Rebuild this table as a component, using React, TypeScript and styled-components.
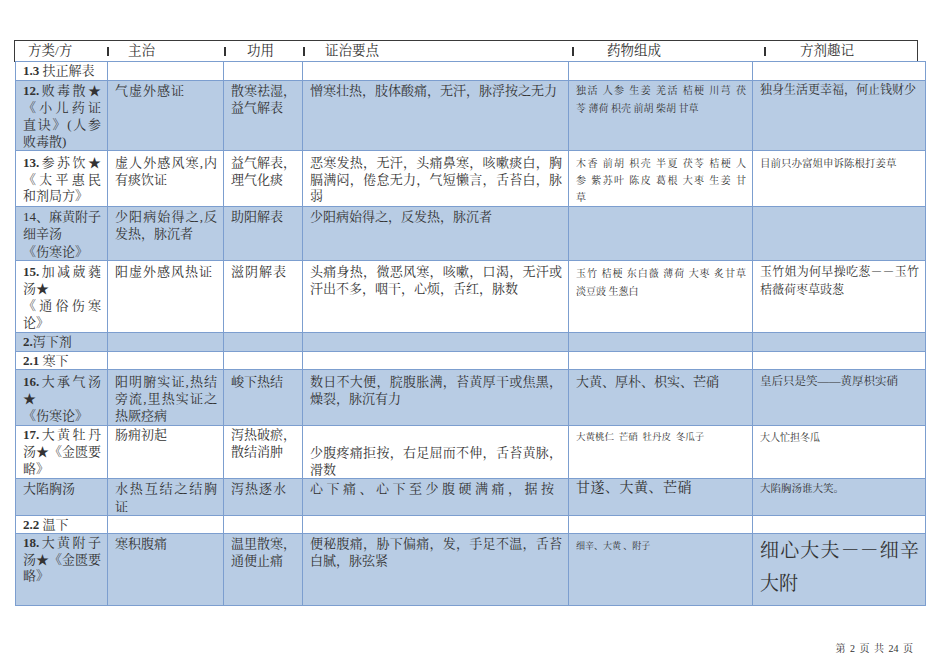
import React from 'react';
import styled, { createGlobalStyle } from 'styled-components';

const GlobalStyle = createGlobalStyle`
  html, body {
    margin: 0;
    padding: 0;
    background: #ffffff;
  }
  body {
    font-family: "Liberation Serif", "Noto Serif CJK SC", "Noto Sans CJK SC", serif;
    color: #333333;
  }
`;

const Page = styled.div`
  width: 950px;
  height: 672px;
  box-sizing: border-box;
  padding: 40px 0 0 14px;
`;

const HeaderBar = styled.div`
  display: grid;
  grid-template-columns: 92px 117px 79px 269px 192px 1fr;
  align-items: center;
  width: 904px;
  height: 22px;
  box-sizing: border-box;
  border: 1px solid #3a3a3a;
  font-size: 13.5px;
  line-height: 20px;
  white-space: nowrap;
`;

const HeadCell = styled.div`
  display: flex;
  align-items: center;
`;

const Bar = styled.span`
  display: inline-block;
  width: 1.5px;
  height: 9px;
  background: #333333;
`;

const Label = styled.span<{ $indent: number }>`
  margin-left: ${p => p.$indent}px;
`;

const Table = styled.table`
  width: 910px;
  margin: -1px 0 0 1px;
  border-collapse: collapse;
  table-layout: fixed;
  border: 1.5px solid #5b81b9;
`;

const Col = styled.col<{ $w: number }>`
  width: ${p => p.$w}px;
`;

const Row = styled.tr<{ $blue?: boolean; $h: number }>`
  height: ${p => p.$h}px;
  background: ${p => (p.$blue ? '#b8cce4' : '#ffffff')};
`;

const Cell = styled.td<{ $size?: number; $lh?: number; $ls?: number; $pt?: number }>`
  border: 1px solid #7c9ecf;
  padding: ${p => p.$pt ?? 1}px 6px 0 7px;
  vertical-align: top;
  font-size: ${p => p.$size ?? 13}px;
  line-height: ${p => p.$lh ?? 17}px;
  letter-spacing: ${p => p.$ls ?? 0}px;
`;

// a line that Word stretched to the cell width
const J = styled.span`
  display: block;
  text-align: justify;
  text-align-last: justify;
`;

const L = styled.span`
  display: block;
`;

const Num = styled.b`
  font-family: "Liberation Serif", serif;
  font-weight: bold;
`;

const Footer = styled.div`
  width: 904px;
  box-sizing: border-box;
  margin-top: 36px;
  padding-right: 5px;
  text-align: right;
  font-size: 10px;
  line-height: 14px;
  word-spacing: 2px;
  color: #333333;
`;

const COLS = [92, 116, 79, 266, 184, 173];

const r13 = { $pt: 4, $lh: 16.5 };
const r14 = { $pt: 1, $lh: 17.3 };
const r16 = { $pt: 3 };
const sec = { $pt: 1, $lh: 16 };

export default function App() {
  return (
    <>
      <GlobalStyle />
      <Page>
        <HeaderBar>
          <HeadCell><Label $indent={13}>方类/方</Label></HeadCell>
          <HeadCell><Bar /><Label $indent={19.5}>主治</Label></HeadCell>
          <HeadCell><Bar /><Label $indent={21.5}>功用</Label></HeadCell>
          <HeadCell><Bar /><Label $indent={20.5}>证治要点</Label></HeadCell>
          <HeadCell><Bar /><Label $indent={33.5}>药物组成</Label></HeadCell>
          <HeadCell><Bar /><Label $indent={34.5}>方剂趣记</Label></HeadCell>
        </HeaderBar>

        <Table>
          <colgroup>
            {COLS.map((w, i) => <Col key={i} $w={w} />)}
          </colgroup>
          <tbody>
            <Row $h={19}>
              <Cell {...sec}><L><Num>1.3</Num> 扶正解表</L></Cell>
              <Cell /><Cell /><Cell /><Cell /><Cell />
            </Row>

            <Row $blue $h={70}>
              <Cell>
                <J><Num>12.</Num>败毒散★</J>
                <J>《小儿药证</J>
                <J>直诀》(人参</J>
                <L>败毒散)</L>
              </Cell>
              <Cell $ls={1}>气虚外感证</Cell>
              <Cell><L>散寒祛湿，</L><L>益气解表</L></Cell>
              <Cell><L>憎寒壮热，肢体酸痛，无汗，脉浮按之无力</L></Cell>
              <Cell $size={10} $lh={18}>
                <J>独活 人参 生姜 羌活 桔梗 川芎 茯</J>
                <L>苓 薄荷 枳壳 前胡 柴胡 甘草</L>
              </Cell>
              <Cell $size={12}>独身生活更幸福，何止钱财少</Cell>
            </Row>

            <Row $h={55}>
              <Cell {...r13}>
                <J><Num>13.</Num>参苏饮★</J>
                <J>《太平惠民</J>
                <L>和剂局方》</L>
              </Cell>
              <Cell {...r13}><J>虚人外感风寒,内</J><L>有痰饮证</L></Cell>
              <Cell {...r13}><L>益气解表，</L><L>理气化痰</L></Cell>
              <Cell {...r13}>
                <J>恶寒发热，无汗，头痛鼻寒，咳嗽痰白，胸</J>
                <J>膈满闷，倦怠无力，气短懒言，舌苔白，脉</J>
                <L>弱</L>
              </Cell>
              <Cell $pt={4} $lh={17} $size={10}>
                <J>木香 前胡 枳壳 半夏 茯苓 桔梗 人</J>
                <J>参 紫苏叶 陈皮 葛根 大枣 生姜 甘</J>
                <L>草</L>
              </Cell>
              <Cell $pt={4} $lh={17} $size={10.5}>目前只办富姐申诉陈根打姜草</Cell>
            </Row>

            <Row $blue $h={54}>
              <Cell {...r14}>
                <J>14、麻黄附子</J>
                <L>细辛汤</L>
                <L>《伤寒论》</L>
              </Cell>
              <Cell {...r14}><J>少阳病始得之,反</J><L>发热，脉沉者</L></Cell>
              <Cell {...r14}>助阳解表</Cell>
              <Cell {...r14}>少阳病始得之，反发热，脉沉者</Cell>
              <Cell /><Cell />
            </Row>

            <Row $h={72}>
              <Cell $pt={1.5}>
                <J><Num>15.</Num>加减葳蕤</J>
                <L>汤★</L>
                <J>《通俗伤寒</J>
                <L>论》</L>
              </Cell>
              <Cell $pt={1.5} $ls={1}>阳虚外感风热证</Cell>
              <Cell $pt={1.5} $ls={1}>滋阴解表</Cell>
              <Cell $pt={1.5}>
                <J>头痛身热，微恶风寒，咳嗽，口渴，无汗或</J>
                <L>汗出不多，咽干，心烦，舌红，脉数</L>
              </Cell>
              <Cell $pt={3.5} $size={10} $lh={18}>
                <J>玉竹 桔梗 东白薇 薄荷 大枣 炙甘草</J>
                <L>淡豆豉 生葱白</L>
              </Cell>
              <Cell $pt={2} $size={12} $lh={18}>
                <J>玉竹姐为何早操吃葱－－玉竹</J>
                <L>桔薇荷枣草豉葱</L>
              </Cell>
            </Row>

            <Row $blue $h={19}>
              <Cell {...sec}><L><Num>2.</Num>泻下剂</L></Cell>
              <Cell /><Cell /><Cell /><Cell /><Cell />
            </Row>

            <Row $h={18}>
              <Cell {...sec}><L><Num>2.1</Num> 寒下</L></Cell>
              <Cell /><Cell /><Cell /><Cell /><Cell />
            </Row>

            <Row $blue $h={56}>
              <Cell {...r16}>
                <J><Num>16.</Num>大承气汤</J>
                <L>★</L>
                <L>《伤寒论》</L>
              </Cell>
              <Cell {...r16}>
                <J>阳明腑实证,热结</J>
                <J>旁流,里热实证之</J>
                <L>热厥痉病</L>
              </Cell>
              <Cell {...r16}>峻下热结</Cell>
              <Cell {...r16}>
                <J>数日不大便，脘腹胀满，苔黄厚干或焦黑，</J>
                <L>燥裂，脉沉有力</L>
              </Cell>
              <Cell {...r16}>大黄、厚朴、枳实、芒硝</Cell>
              <Cell {...r16} $size={11.5}>皇后只是笑——黄厚枳实硝</Cell>
            </Row>

            <Row $h={53}>
              <Cell $pt={0}>
                <J><Num>17.</Num>大黄牡丹</J>
                <J>汤★《金匮要</J>
                <L>略》</L>
              </Cell>
              <Cell $pt={0}>肠痈初起</Cell>
              <Cell $pt={0}><L>泻热破瘀，</L><L>散结消肿</L></Cell>
              <Cell $pt={18}>
                <J>少腹疼痛拒按，右足屈而不伸，舌苔黄脉，</J>
                <L>滑数</L>
              </Cell>
              <Cell $pt={2.5} $size={9.5}>大黄桃仁&nbsp; 芒硝&nbsp; 牡丹皮&nbsp; 冬瓜子</Cell>
              <Cell $pt={2.5} $size={10}>大人忙担冬瓜</Cell>
            </Row>

            <Row $blue $h={37}>
              <Cell $pt={1}>大陷胸汤</Cell>
              <Cell $pt={1} $lh={17.5}><J>水热互结之结胸</J><L>证</L></Cell>
              <Cell $pt={1} $ls={1}>泻热逐水</Cell>
              <Cell $pt={1} $ls={3.5}>心下痛、心下至少腹硬满痛，据按</Cell>
              <Cell $pt={0} $size={14} $ls={0.5}>甘遂、大黄、芒硝</Cell>
              <Cell $pt={1} $size={10.5}>大陷胸汤谁大笑。</Cell>
            </Row>

            <Row $h={18}>
              <Cell {...sec}><L><Num>2.2</Num> 温下</L></Cell>
              <Cell /><Cell /><Cell /><Cell /><Cell />
            </Row>

            <Row $blue $h={72}>
              <Cell $lh={16.7}>
                <J><Num>18.</Num>大黄附子</J>
                <J>汤★《金匮要</J>
                <L>略》</L>
              </Cell>
              <Cell>寒积腹痛</Cell>
              <Cell><L>温里散寒，</L><L>通便止痛</L></Cell>
              <Cell>
                <J>便秘腹痛，胁下偏痛，发，手足不温，舌苔</J>
                <L>白腻，脉弦紧</L>
              </Cell>
              <Cell $pt={3.5} $size={9}>细辛、大黄 、附子</Cell>
              <Cell $pt={0} $size={19} $lh={33}>
                <J>细心大夫－－细辛</J>
                <L>大附</L>
              </Cell>
            </Row>
          </tbody>
        </Table>

        <Footer>第 2 页 共 24 页</Footer>
      </Page>
    </>
  );
}
